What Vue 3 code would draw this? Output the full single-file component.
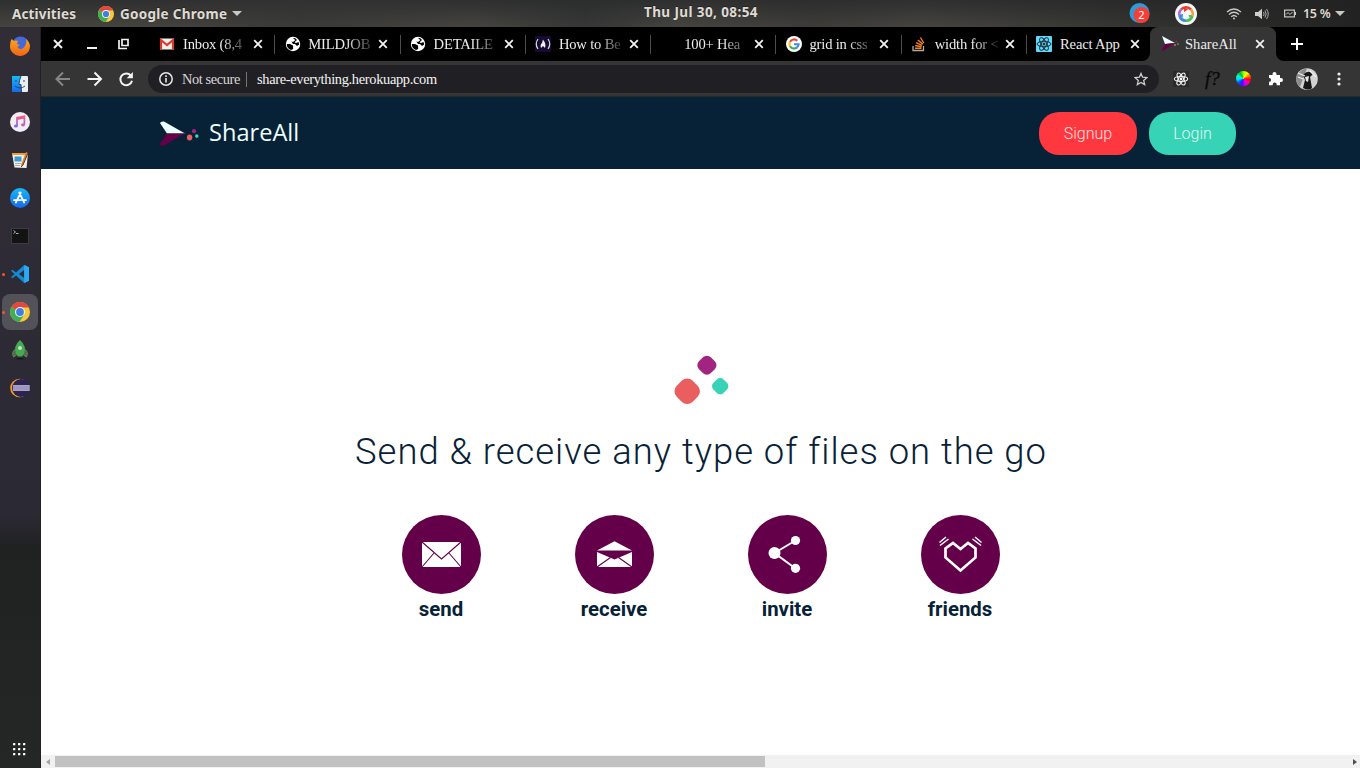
<script setup>
const tabs = [
  { icon: 'gmail', title: 'Inbox (8,4' },
  { icon: 'globe', title: 'MILDJOB' },
  { icon: 'globe', title: 'DETAILE' },
  { icon: 'fcc', title: 'How to Be' },
  { icon: 'none', title: '100+ Hea' },
  { icon: 'google', title: 'grid in css' },
  { icon: 'stack', title: 'width for <' },
  { icon: 'react', title: 'React App', full: true, last: true },
  { icon: 'share', title: 'ShareAll', full: true, active: true },
]
const dock = [
  { name: 'firefox' }, { name: 'finder' }, { name: 'music' }, { name: 'pages' }, { name: 'store' },
  { name: 'terminal' }, { name: 'code', running: true }, { name: 'chrome', running: true, active: true },
  { name: 'rocket' }, { name: 'eclipse' },
]
const features = ['send', 'receive', 'invite', 'friends']
</script>

<template>
  <div class="desktop">
    <svg class="defs" width="0" height="0">
      <defs>
        <symbol id="chrome" viewBox="0 0 20 20">
          <circle cx="10" cy="10" r="10" fill="#f7ca3e" />
          <path d="M10 10 L1.4 5 A10 10 0 0 0 9.5 20 L14.3 12.5Z" fill="#3fae57" />
          <path d="M10 10 L1.4 5 A10 10 0 0 1 18.9 5.5 H10Z" fill="#e0483d" />
          <circle cx="10" cy="10" r="5" fill="#f4f4f4" />
          <circle cx="10" cy="10" r="3.9" fill="#3f7fe0" />
        </symbol>
        <symbol id="logo" viewBox="0 0 40 26">
          <path d="M0 2 Q1 0 4 0.5 L25 12.6 H7Z" fill="#ecffff" />
          <path d="M7 12.6 H25 L4 24.6 Q0 26 0 22.5Z" fill="#640049" />
          <ellipse cx="29.6" cy="16.4" rx="2.7" ry="3" fill="#eb5e60" />
          <circle cx="34" cy="10.2" r="2.1" fill="#a02480" />
          <circle cx="36.8" cy="15.1" r="1.8" fill="#37d3b6" />
        </symbol>
        <linearGradient id="blue" x1="0" y1="0" x2="0" y2="1"><stop offset="0" stop-color="#16b9fa" /><stop offset="1" stop-color="#1769ec" /></linearGradient>
        <linearGradient id="note" x1="0" y1="0" x2="0" y2="1"><stop offset="0" stop-color="#fb5b80" /><stop offset="1" stop-color="#7d6ce8" /></linearGradient>
        <linearGradient id="fox" x1="0" y1="0" x2="0" y2="1"><stop offset="0" stop-color="#f9a620" /><stop offset="1" stop-color="#ef6514" /></linearGradient>
      </defs>
    </svg>

    <header class="topbar">
      <span class="activities">Activities</span>
      <svg class="app-icon" width="16" height="16"><use href="#chrome" /></svg>
      <span class="app-name">Google Chrome</span>
      <i class="caret"></i>
      <span class="clock">Thu Jul 30, 08:54</span>
      <div class="tray">
        <svg class="notif" width="22" height="22" viewBox="0 0 22 22">
          <circle cx="10.5" cy="10" r="10" fill="#2c9bda" />
          <circle cx="12.5" cy="12" r="8" fill="#f43f38" />
          <text x="12.5" y="16" text-anchor="middle" font-size="11" fill="#fff">2</text>
        </svg>
        <svg class="round" width="22" height="22" viewBox="0 0 22 22">
          <circle cx="11" cy="11" r="11" fill="#f7f7f7" />
          <g fill="none" stroke-width="2.6">
            <path d="M6 6.5 A6.7 6.7 0 0 1 16 6.5" stroke="#e93d32" />
            <path d="M16 6.5 A6.7 6.7 0 0 1 17.4 13" stroke="#f2a33a" />
            <path d="M17.4 13 A6.7 6.7 0 0 1 11 17.7" stroke="#4fbd5b" />
            <path d="M11 17.7 A6.7 6.7 0 0 1 4.6 13" stroke="#318ce3" />
            <path d="M4.6 13 A6.7 6.7 0 0 1 6 6.5" stroke="#b06bd0" />
          </g>
          <path d="M9 4 L13 6.5 L9 9Z" fill="#e93d32" /><path d="M4 12 L8 11 L7.5 15Z" fill="#318ce3" /><path d="M13.5 12 L17 12 L15 15.5Z" fill="#4fbd5b" />
        </svg>
        <svg class="wifi" width="16" height="14" viewBox="0 0 16 14" fill="none" stroke="#c9c8c5" stroke-width="1.3">
          <path d="M1 5 Q8 -1 15 5 M3 7.5 Q8 3 13 7.5 M5.2 9.8 Q8 7.2 10.8 9.8" /><circle cx="8" cy="11.5" r="1" fill="#c9c8c5" stroke="none" />
        </svg>
        <svg class="sound" width="14" height="12" viewBox="0 0 14 12">
          <path d="M0 4 H3 L7 .8 V11.2 L3 8 H0Z" fill="#d0cfcc" />
          <path d="M8.5 4 Q9.7 6 8.5 8 M10 2.5 Q12.3 6 10 9.5 M11.5 1 Q15 6 11.5 11" fill="none" stroke="#aaa9a6" />
        </svg>
        <svg class="battery" width="12" height="10" viewBox="0 0 12 10">
          <rect x=".6" y="1.1" width="9.8" height="6.8" fill="none" stroke="#c9c8c5" stroke-width="1.2" />
          <rect x="10.8" y="3" width="1.2" height="3" fill="#c9c8c5" />
          <path d="M2 5.5 L4 3.5 L6 5.5 L8.5 3" fill="none" stroke="#c9c8c5" />
        </svg>
        <span class="percent">15 %</span>
        <i class="caret"></i>
      </div>
    </header>

    <div class="body">
      <nav class="dock">
        <div v-for="d in dock" :key="d.name" class="dock-item" :class="{ selected: d.active }">
          <i v-if="d.running" class="run-dot"></i>
          <svg v-if="d.name === 'chrome'" width="20" height="20"><use href="#chrome" /></svg>
          <svg v-else width="20" height="20" viewBox="0 0 20 20">
            <g v-if="d.name === 'firefox'">
              <circle cx="10.5" cy="9" r="8.5" fill="#4668d8" />
              <path d="M1.5 3 L4 5 Q6 4 8 5 L7 8 L10 9 Q7 10 8 12 Q12 15 15 10 Q17 7 16 3 Q20 6 20 11 A10 9.5 0 0 1 0 10 Q0 6 1.5 3Z" fill="url(#fox)" />
            </g>
            <g v-else-if="d.name === 'finder'">
              <rect x="2" y="2" width="16" height="16" rx="1" fill="#e8eef4" /><path d="M2 2 H11 Q9 7 9 11 H11 L11.5 18 H2Z" fill="url(#blue)" />
              <path d="M5 12 Q10 16 15 12 M6 6 V8 M14 6 V8 M11 2 Q9 7 9 10.5 H11 L11.5 18" fill="none" stroke="#213c5a" stroke-width=".9" />
            </g>
            <g v-else-if="d.name === 'music'">
              <circle cx="10" cy="10" r="10" fill="#f1edf3" />
              <path d="M7 14 V5.7 L14.4 4.2 V12.5 M7 7.2 L14.4 5.7" fill="none" stroke="url(#note)" stroke-width="1.7" />
              <ellipse cx="5.9" cy="14" rx="2" ry="1.6" fill="#8a68e6" /><ellipse cx="13" cy="12.8" rx="2" ry="1.6" fill="#c165c0" />
            </g>
            <g v-else-if="d.name === 'pages'">
              <path d="M2 3 H18 L16.5 18 L4.5 17.5Z" fill="#f5f3ee" /><path d="M2 3 H18 L17.7 5 H2.2Z" fill="#f09b31" />
              <rect x="4.5" y="6.5" width="7" height="5" fill="#389bd5" /><path d="M5 13.5 H11 M5 15.5 H10" stroke="#aaa" />
              <path d="M16 2 L18 3 L13 15 L11 17 L11.3 14Z" fill="#e77f1c" /><path d="M18 3 L13 15 L11 17" stroke="#443b37" fill="none" />
            </g>
            <g v-else-if="d.name === 'store'">
              <circle cx="10" cy="10" r="10" fill="url(#blue)" />
              <path d="M10.8 4.5 L5.8 14.5 M9.2 4.5 L14.2 14.5 M4 12.2 H11 M13.5 12.2 H16" fill="none" stroke="#fff" stroke-width="1.7" stroke-linecap="round" />
            </g>
            <g v-else-if="d.name === 'terminal'">
              <rect x="1.5" y="2.5" width="17" height="15" fill="#111413" stroke="#3c3c40" /><path d="M3.5 4.5 L5.5 6 L3.5 7.5 M6 7.5 H8.5" fill="none" stroke="#c0c4c0" stroke-width=".9" />
            </g>
            <g v-else-if="d.name === 'code'">
              <path d="M14.2 1 L19 3.3 V16.7 L14.2 19 L6 11.5 L2.5 14.2 L1 13.3 L4.5 10 L1 6.7 L2.5 5.8 L6 8.5Z M14.2 6 L9 10 L14.2 14Z" fill="#118bd3" fill-rule="evenodd" /><path d="M14.2 1 L19 3.3 V16.7 L14.2 19Z" fill="#2da9f3" />
            </g>
            <g v-else-if="d.name === 'rocket'">
              <ellipse cx="10" cy="18.8" rx="4" ry=".8" fill="#17171b" />
              <path d="M5.5 9 Q1 12 3.5 17 L6.5 15 M14.5 9 Q19 12 16.5 17 L13.5 15" fill="#447247" stroke="#8a827b" stroke-width=".8" />
              <path d="M10 0 Q17 6 14 14 L12 16.5 H8 L6 14 Q3 6 10 0Z" fill="#45aa50" /><circle cx="10" cy="8" r="2" fill="#bce6ca" />
            </g>
            <g v-else>
              <circle cx="9.5" cy="10" r="9.3" fill="#f39a28" /><circle cx="11" cy="10" r="9" fill="#2b2353" /><rect x="3" y="7" width="16.7" height="6" fill="#a9a3c3" />
              <path d="M3 9 H20 M3 11 H20" stroke="#8c85af" stroke-width=".7" />
            </g>
          </svg>
        </div>
        <svg class="apps" width="14" height="14" viewBox="0 0 14 14" fill="#fff">
          <template v-for="r in 3" :key="r"><rect v-for="c in 3" :key="c" :x="c * 5 - 5" :y="r * 5 - 5" width="2.3" height="2.3" rx=".5" /></template>
        </svg>
      </nav>

      <main class="window">
        <div class="tabbar">
          <svg class="controls" width="108" height="34" viewBox="0 0 108 34" fill="none" stroke="#f2f2f2" stroke-width="2">
            <path d="M13 13 L21 21 M21 13 L13 21" /><path d="M46 21 H56" />
            <path d="M81 12.5 H87 V18.5 H81Z M78 13 V21.5 H86" stroke-width="1.7" />
          </svg>
          <div v-for="(t, i) in tabs" :key="i" class="tab" :class="{ active: t.active, last: t.last, line: i < 7 }">
            <svg v-if="t.icon === 'share'" class="fav" width="18" height="16" viewBox="0 0 18 16">
              <path d="M1 0 L14 7 L4 8Z" fill="#ecffff" /><path d="M4 8 L14 7 L2 15 L1 14Z" fill="#640049" />
              <circle cx="14" cy="9" r="1" fill="#eb5e60" /><circle cx="15.5" cy="5.5" r=".8" fill="#a02480" /><circle cx="17" cy="8" r=".8" fill="#37d3b6" />
            </svg>
            <svg v-else class="fav" width="16" height="16" viewBox="0 0 16 16">
              <g v-if="t.icon === 'gmail'">
                <rect x="1" y="2.5" width="14" height="11" fill="#eee" /><path d="M2 13.5 V4 L8 9 L14 4 V13.5" fill="none" stroke="#d93a2d" stroke-width="2.2" />
              </g>
              <g v-else-if="t.icon === 'globe'">
                <circle cx="8" cy="8" r="7.2" fill="#fff" />
                <path d="M1.8 8 H5 L8 9.5 L8.2 13 L6 14 Q1.5 12 1.8 8Z M8 2.5 L10.5 4 L8 6 L6.3 5.5 L8 8 H10 L12 10 L14.2 8.5 L13.5 6 L11 7 L9.5 6.3 L12 4 L10 2Z" fill="#000" />
              </g>
              <g v-else-if="t.icon === 'fcc'">
                <rect width="16" height="16" fill="#170b34" />
                <path d="M3 3 Q-.5 8 3 13 M13 3 Q16.5 8 13 13" fill="none" stroke="#ddd" stroke-width="1.2" /><path d="M8 3.5 Q11.5 8 10 12 L8 10 L6 12 Q4.8 9 7 7Z" fill="#eee" />
              </g>
              <g v-else-if="t.icon === 'google'" fill="none" stroke-width="2.1">
                <circle cx="8" cy="8" r="8" fill="#fff" stroke="none" /><path d="M4 5.7 A4.6 4.6 0 0 1 11.2 4.7" stroke="#e94235" /><path d="M4 5.7 A4.6 4.6 0 0 0 4 10.3" stroke="#fbbc05" />
                <path d="M4 10.3 A4.6 4.6 0 0 0 11 11.4" stroke="#34a853" /><path d="M11 11.4 Q12.6 10 12.6 8.2 H8" stroke="#4285f4" />
              </g>
              <g v-else-if="t.icon === 'stack'" fill="none">
                <path d="M2 10 V14.5 H12.5 V10" stroke="#aaa" stroke-width="1.3" />
                <path d="M4 12.3 H10.5 M4.2 9.5 L10.6 10.7 M5 6.7 L11 9.4 M6.8 4 L11.8 8.1 M9.4 1.5 L12.8 7" stroke="#f48024" stroke-width="1.4" />
              </g>
              <g v-else-if="t.icon === 'react'" fill="none" stroke="#20303a">
                <rect width="16" height="16" rx="1" fill="#61dafb" stroke="none" /><ellipse cx="8" cy="8" rx="7" ry="2.7" /><ellipse cx="8" cy="8" rx="7" ry="2.7" transform="rotate(60 8 8)" /><ellipse cx="8" cy="8" rx="7" ry="2.7" transform="rotate(120 8 8)" /><circle cx="8" cy="8" r="1" fill="#20303a" />
              </g>
            </svg>
            <span class="tab-title" :class="{ fade: !t.full }">{{ t.title }}</span>
            <svg class="close" width="10" height="10" viewBox="0 0 10 10" stroke="#f2f2f2" stroke-width="1.8"><path d="M1.2 1.2 L8.8 8.8 M8.8 1.2 L1.2 8.8" /></svg>
          </div>
          <div class="newtab"><svg width="12" height="12" viewBox="0 0 12 12" stroke="#fff" stroke-width="2"><path d="M6 0 V12 M0 6 H12" /></svg></div>
        </div>

        <div class="toolbar">
          <svg class="nav" width="94" height="16" viewBox="0 0 94 16" fill="none" stroke-width="2">
            <path d="M15 8 H2 M8 1.5 L1.5 8 L8 14.5" stroke="#85868a" />
            <path d="M32.5 8 H45.5 M39.5 1.5 L46 8 L39.5 14.5" stroke="#f4f4f4" />
            <path d="M75.8 4.5 A5.9 5.9 0 1 0 77 9.8" stroke="#f4f4f4" /><path d="M77.9 1 V7.2 H71.7Z" fill="#f4f4f4" />
          </svg>
          <div class="omnibox">
            <svg width="14" height="14" viewBox="0 0 14 14" fill="none" stroke="#e6e6e7" stroke-width="1.5"><circle cx="7" cy="7" r="6.2" /><path d="M7 6 V10.5 M7 3.3 V5" stroke-width="1.6" /></svg>
            <span class="insecure">Not secure</span>
            <span class="url">share-everything.herokuapp.com</span>
            <svg class="star" width="14" height="14" viewBox="0 0 14 14" fill="none" stroke="#cacaca" stroke-width="1.3"><path d="M7 1.4 L8.6 5.2 L12.9 5.6 L9.7 8.4 L10.7 12.6 L7 10.4 L3.3 12.6 L4.3 8.4 L1.1 5.6 L5.4 5.2Z" /></svg>
          </div>
          <svg class="ext react" width="16" height="16" viewBox="0 0 16 16" fill="none" stroke="#f2f2f2" stroke-width="1.1"><rect width="16" height="16" fill="#292929" stroke="none" /><ellipse cx="8" cy="8" rx="6.7" ry="2.5" /><ellipse cx="8" cy="8" rx="6.7" ry="2.5" transform="rotate(60 8 8)" /><ellipse cx="8" cy="8" rx="6.7" ry="2.5" transform="rotate(120 8 8)" /><circle cx="8" cy="8" r="1.4" fill="#fff" stroke="none" /></svg>
          <span class="fx">f?</span>
          <div class="wheel"></div>
          <svg class="ext" width="15" height="15" viewBox="0 0 15 15"><path d="M1 4 H4.5 V3 A2 2 0 0 1 8.5 3 V4 H12 V7 H13 A2 2 0 0 1 13 11 H12 V14.2 H8.7 V13.5 A2 2 0 0 0 4.7 13.5 V14.2 H1 V10.8 H1.7 A2 2 0 0 0 1.7 7 H1Z" fill="#fff" /></svg>
          <svg class="avatar" width="22" height="22" viewBox="0 0 22 22"><circle cx="11" cy="11" r="10.8" fill="#d2d2d2" /><path d="M1 7 Q5 1 11 .2 L8 8 L4 19 Q-2 13 1 7Z" fill="#8c8c8c" /><path d="M7 7 Q12 1 17 6 L14 9 L16 20 Q13 23 7 20 L9 12Z" fill="#171717" /><path d="M9 9 L13 8 L12 14 L10 13Z" fill="#e5e5e5" /><path d="M2 5 L9 8 M2 9 L7 11 M14 3 L20 9" stroke="#f2f2f2" stroke-width="1.3" /></svg>
          <svg class="dots" width="4" height="14" viewBox="0 0 4 14" fill="#eee"><circle cx="2" cy="2" r="1.6" /><circle cx="2" cy="7" r="1.6" /><circle cx="2" cy="12" r="1.6" /></svg>
        </div>

        <section class="page">
          <header class="site-head">
            <svg class="logo" width="40" height="26"><use href="#logo" /></svg>
            <span class="brand">ShareAll</span>
            <a class="btn signup">Signup</a>
            <a class="btn login">Login</a>
          </header>
          <div class="hero">
            <svg class="blobs" width="56" height="50" viewBox="0 0 56 50">
              <rect x="2.9" y="25" width="22.6" height="22.6" rx="7.8" transform="rotate(45 14.2 36.3)" fill="#eb5e60" />
              <rect x="25.5" y="1.8" width="16.8" height="16.8" rx="5.6" transform="rotate(45 33.9 10.2)" fill="#a02480" />
              <rect x="40" y="24" width="14.4" height="14.4" rx="4.8" transform="rotate(45 47.2 31.2)" fill="#37d3b6" />
            </svg>
            <h1>Send &amp; receive any type of files on the go</h1>
            <div class="features">
              <div v-for="f in features" :key="f" class="feature">
                <svg width="79" height="79" viewBox="0 0 79 79">
                  <circle cx="39.5" cy="39.5" r="39.5" fill="#640049" />
                  <g v-if="f === 'send'"><rect x="20" y="27" width="39" height="25" fill="#fff" /><path d="M20 27 L39.5 44 L59 27 M20 52 L32 38 M59 52 L47 38" fill="none" stroke="#640049" stroke-width="1.1" /></g>
                  <g v-else-if="f === 'receive'"><path d="M22 35.6 L39.5 26.3 L57 35.6Z" fill="#fff" /><path d="M22 37 L39.5 44.5 L57 37 V52 H22Z" fill="#fff" /><path d="M22 52 L35.5 42.5 M57 52 L43.5 42.5" stroke="#640049" stroke-width="1.1" /></g>
                  <g v-else-if="f === 'invite'"><path d="M47.5 25.5 L26.5 38 L47.5 53.5" fill="none" stroke="#fff" stroke-width="2" /><circle cx="26.5" cy="38" r="6" fill="#fff" /><circle cx="47.5" cy="25.5" r="4.6" fill="#fff" /><circle cx="47.5" cy="53.3" r="4.6" fill="#fff" /></g>
                  <g v-else fill="none" stroke="#fff"><path d="M39.5 55.5 L24.5 42.5 V33.5 L32 28 L39.5 34 L47 28 L54.5 33.5 V42.5Z" stroke-width="2.7" /><path d="M18.5 27.5 L25 22 M19 30.5 L27.5 24 M60.5 27.5 L54 22 M60 30.5 L51.5 24" stroke-width="1.5" /></g>
                </svg>
                <strong>{{ f }}</strong>
              </div>
            </div>
          </div>
        </section>
        <div class="scrollbar"><i class="left"></i><div class="thumb"></div><i class="right"></i></div>
      </main>
    </div>
  </div>
</template>

<style>
html, body { margin: 0; overflow: hidden; }
</style>

<style scoped>
* { box-sizing: border-box; }
svg { display: block; flex: none; }
.desktop { width: 1360px; height: 768px; display: flex; flex-direction: column; overflow: hidden; font-family: "Noto Sans", sans-serif; }
.defs { position: absolute; }
.topbar { height: 27px; flex: none; position: relative; display: flex; align-items: center; padding-left: 12px; color: #dfdbd2; font-weight: 700; font-size: 13.5px; white-space: nowrap; text-shadow: 0 -1px #222;
  background: linear-gradient(90deg, #55534d00 10%, #3339 22%, #0000 35%, #282b2d88 43%, #0000 50%, #2929294d 60%, #0000 68%, #222 100%), linear-gradient(#2e2f2f, #45443f); }
.activities { width: 65px; letter-spacing: .15px; }
.app-icon { margin: 0 6px 0 21px; }
.app-name { width: 108px; letter-spacing: .28px; }
.caret { border: 5px solid transparent; border-top-color: #c9c8c5; border-bottom: 0; margin-left: 4px; }
.clock { position: absolute; left: 644px; top: 3px; font-size: 13.5px; letter-spacing: .4px; }
.tray { margin-left: auto; display: flex; align-items: center; padding-right: 15px; }
.notif { margin-right: 24px; font-weight: 400; text-shadow: none; }
.round { margin-right: 29px; }
.wifi { margin-right: 13px; }
.sound { margin-right: 15px; }
.battery { margin-right: 7px; }
.percent { width: 28px; font-size: 12.5px; font-weight: 600; letter-spacing: -.3px; }
.body { flex: 1; display: flex; min-height: 0; }
.dock { width: 41px; display: flex; flex-direction: column; align-items: center; gap: 2px; padding: 1px 1px 11px 0; background: linear-gradient(#302d37 0, #2b2933 66%, #202222 70%, #252626 100%); border-right: 1px solid #202024; }
.dock-item { width: 36px; height: 36px; display: flex; align-items: center; justify-content: center; position: relative; border-radius: 8px; }
.selected { background: #545259; }
.run-dot { position: absolute; width: 3px; height: 3px; background: #f15a2b; border-radius: 2px; left: 0; top: 17px; }
.apps { margin: auto 0 0 1px; }
.window { flex: 1; min-width: 0; display: flex; flex-direction: column; }
.tabbar { height: 34px; flex: none; display: flex; background: linear-gradient(#000 0 17px, #353535 17px); font: 14.6px "Liberation Serif", serif; color: #ececec; }
.controls { background: #000; }
.tab { width: 125.3px; flex: none; background: #000; display: flex; align-items: center; padding-left: 10.4px; position: relative; }
.tab.line::after { content: ''; position: absolute; right: -1px; top: 8px; width: 1px; height: 19px; background: #4c4c4c; z-index: 1; }
.tab.last { width: 123.9px; border-bottom-right-radius: 8px; }
.tab.active { width: 126px; background: #353535; border-radius: 8px 8px 0 0; padding-left: 11px; }
.tab-title { width: 63px; margin-left: 7.6px; overflow: hidden; white-space: nowrap; letter-spacing: -.18px; }
.active .tab-title { margin-left: 6px; letter-spacing: 0; }
.fade { mask-image: linear-gradient(90deg, #000 60%, #0003 100%); }
.close { margin-left: 7px; }
.newtab { flex: 1; background: #000; border-bottom-left-radius: 8px; padding: 11px 0 0 15px; }
.toolbar { height: 36px; flex: none; display: flex; align-items: center; background: #353535; border-bottom: 1px solid #292929; padding-left: 14px; }
.nav { margin-right: -1px; }
.omnibox { width: 1011px; height: 28px; background: #202024; border-radius: 14px; display: flex; align-items: center; padding: 0 11px; font: 14.4px "Liberation Serif", serif; color: #f3f3f3; }
.omnibox span { position: relative; top: 1px; }
.insecure { margin-left: 9px; width: 65px; height: 15px; line-height: 15px; border-right: 1px solid #777; white-space: nowrap; color: #d7d7d8; letter-spacing: -.4px; }
.url { margin-left: 10px; letter-spacing: -.32px; }
.star { margin-left: auto; }
.react { margin-left: 14px; }
.fx { width: 17px; margin: 0 14px 0 16px; font: italic 19px "Liberation Serif", serif; color: #080808; -webkit-text-stroke: .3px #080808; }
.wheel { width: 15px; height: 15px; border-radius: 50%; margin-right: 17px; background: conic-gradient(#8f0, #ff0, #f70, #f00, #f0a, #c0f, #50f, #05f, #0df, #0fb, #0b3, #8f0); }
.avatar { margin: 0 19px 0 13px; }
.page { flex: 1; background: #fff; color: #072136; font-family: Roboto, sans-serif; }
.site-head { height: 72px; background: #072136; display: flex; align-items: center; padding: 0 124px 0 119px; }
.logo { margin-top: 1px; }
.brand { margin: -3px 0 0 9px; color: #ecffff; font: 23.6px "Open Sans", sans-serif; }
.btn { height: 43px; border-radius: 20px; display: flex; align-items: center; justify-content: center; color: #fffd; font-size: 16px; font-weight: 300; }
.signup { width: 98px; background: #ff383f; margin-left: auto; }
.login { width: 87px; background: #37d3b6; margin-left: 12px; }
.hero { display: flex; flex-direction: column; align-items: center; padding-top: 186px; }
h1 { margin: 21px 0 0 1px; font-size: 36.4px; line-height: 52px; font-weight: 300; letter-spacing: 1px; white-space: nowrap; }
.features { display: flex; gap: 94px; margin-top: 37px; }
.feature { width: 79px; display: flex; flex-direction: column; align-items: center; font-size: 20.4px; line-height: 30px; }
.scrollbar { height: 13px; flex: none; background: #f1f1f1; display: flex; align-items: center; padding: 0 3px 0 5px; }
.thumb { width: 710px; height: 11px; background: #c1c1c1; margin-left: 5px; }
.left, .right { border: 3px solid transparent; }
.left { border-right: 4px solid #a3a3a3; border-left: 0; }
.right { border-left: 4px solid #505050; border-right: 0; margin-left: auto; }
</style>
